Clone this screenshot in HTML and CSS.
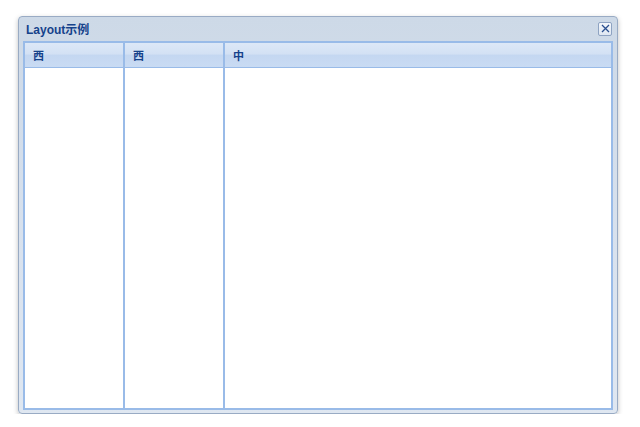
FILE: index.html
```html
<!DOCTYPE html>
<html lang="zh">
<head>
    <meta charset="UTF-8">
    <title>Layout示例</title>
    <link rel="stylesheet" href="styles.css">
</head>
<body>

<div class="window">
    <div class="window-header">
        <span class="window-title">Layout示例</span>
        <span class="tool-close">
            <svg width="11" height="11" viewBox="0 0 11 11">
                <path d="M2 2 L9 9 M9 2 L2 9" stroke="#2a4f8f" stroke-width="1.3" fill="none"/>
            </svg>
        </span>
    </div>
    <div class="window-body">
        <div class="panel west">
            <div class="panel-header">西</div>
            <div class="panel-body"></div>
        </div>
        <div class="panel west">
            <div class="panel-header">西</div>
            <div class="panel-body"></div>
        </div>
        <div class="panel center">
            <div class="panel-header">中</div>
            <div class="panel-body"></div>
        </div>
    </div>
</div>

</body>
</html>
```

FILE: styles.css
```css
* {
    box-sizing: border-box;
}

body {
    margin: 0;
    padding: 16px 0 0 18px;
    background: #fff;
    font-family: "Liberation Sans", "Noto Sans CJK SC", sans-serif;
    font-size: 11px;
}

.window {
    width: 600px;
    height: 398px;
    border: 1px solid #99abc4;
    border-radius: 4px;
    background: linear-gradient(#cdd9e7, #d9e2ee 60%, #dfe7f1);
    box-shadow: 0 2px 5px rgba(0, 0, 0, 0.25);
    display: flex;
    flex-direction: column;
    padding: 0 4px 3px 4px;
}

.window-header {
    height: 24px;
    display: flex;
    align-items: center;
    justify-content: space-between;
    padding: 0 1px 2px 3px;
}

.window-title {
    font-weight: bold;
    color: #15428b;
    font-size: 12px;
}

.tool-close {
    width: 14px;
    height: 14px;
    border: 1px solid #8ea3c2;
    border-radius: 2px;
    background: linear-gradient(#f4f7fb, #dfe7f2);
    display: flex;
    align-items: center;
    justify-content: center;
    margin-top: 1px;
}

.tool-close svg {
    display: block;
}

.window-body {
    flex: 1;
    border: 1px solid #99bbe8;
    background: #fff;
    display: flex;
}

.panel {
    border: 1px solid #99bbe8;
    display: flex;
    flex-direction: column;
}

.panel.west {
    width: 100px;
}

.panel.center {
    flex: 1;
}

.panel-header {
    height: 25px;
    border-bottom: 1px solid #99bbe8;
    background: linear-gradient(#dde8f7, #d3e1f4 45%, #c4d7f1 52%, #c9dbf3);
    color: #15428b;
    font-weight: bold;
    padding: 0 0 0 8px;
    display: flex;
    align-items: center;
}

.panel-body {
    flex: 1;
    background: #fff;
}
```
